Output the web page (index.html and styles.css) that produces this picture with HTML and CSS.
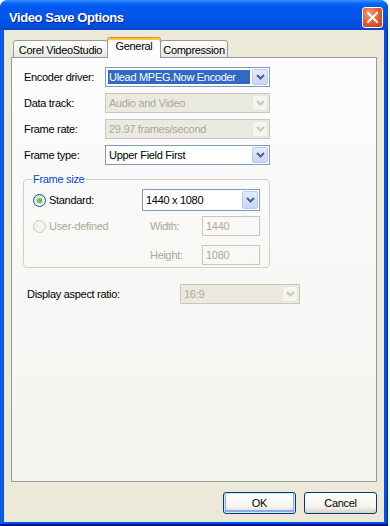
FILE: index.html
```html
<!DOCTYPE html>
<html>
  <head>
    <title>Video Save Options</title>
    <link rel="stylesheet" href="styles.css">
  </head>
  <body>
    <div class="window">
      <div class="titlebar">
        <span class="title">Video Save Options</span>
        <span class="close">
          <svg width="13" height="13" viewBox="0 0 13 13">
            <path d="M2 2L11 11M11 2L2 11" stroke="#fff" stroke-width="2" stroke-linecap="square"/>
          </svg>
        </span>
      </div>

      <div class="client">
        <div class="tabs">
          <span class="tab tab-corel">Corel VideoStudio</span>
          <span class="tab tab-general active">General</span>
          <span class="tab tab-compression">Compression</span>
        </div>

        <div class="panel">
          <div class="row">
            <label>Encoder driver:</label>
            <div class="combo focus">
              <span class="combo-text">Ulead MPEG.Now Encoder</span>
              <span class="combo-btn">
                <svg width="9" height="6" viewBox="0 0 9 6"><path d="M1 1l3.5 3.5L8 1" fill="none" stroke="#4D6185" stroke-width="2"/></svg>
              </span>
            </div>
          </div>
          <div class="row">
            <label>Data track:</label>
            <div class="combo disabled">
              <span class="combo-text">Audio and Video</span>
              <span class="combo-btn">
                <svg width="9" height="6" viewBox="0 0 9 6"><path d="M1 1l3.5 3.5L8 1" fill="none" stroke="#C9C7BA" stroke-width="2"/></svg>
              </span>
            </div>
          </div>
          <div class="row">
            <label>Frame rate:</label>
            <div class="combo disabled">
              <span class="combo-text">29.97 frames/second</span>
              <span class="combo-btn">
                <svg width="9" height="6" viewBox="0 0 9 6"><path d="M1 1l3.5 3.5L8 1" fill="none" stroke="#C9C7BA" stroke-width="2"/></svg>
              </span>
            </div>
          </div>
          <div class="row">
            <label>Frame type:</label>
            <div class="combo">
              <span class="combo-text">Upper Field First</span>
              <span class="combo-btn">
                <svg width="9" height="6" viewBox="0 0 9 6"><path d="M1 1l3.5 3.5L8 1" fill="none" stroke="#4D6185" stroke-width="2"/></svg>
              </span>
            </div>
          </div>

          <fieldset class="group">
            <legend>Frame size</legend>
            <div class="group-grid">
              <div class="option">
                <span class="radio checked"></span>
                <span>Standard:</span>
              </div>
              <div class="combo combo-size">
                <span class="combo-text">1440 x 1080</span>
                <span class="combo-btn">
                  <svg width="9" height="6" viewBox="0 0 9 6"><path d="M1 1l3.5 3.5L8 1" fill="none" stroke="#4D6185" stroke-width="2"/></svg>
                </span>
              </div>

              <div class="option muted">
                <span class="radio disabled"></span>
                <span>User-defined</span>
              </div>
              <span class="dim-label muted">Width:</span>
              <span class="field">1440</span>

              <span class="spacer"></span>
              <span class="dim-label muted last">Height:</span>
              <span class="field last">1080</span>
            </div>
          </fieldset>

          <div class="row aspect">
            <label>Display aspect ratio:</label>
            <div class="combo disabled combo-aspect">
              <span class="combo-text">16:9</span>
              <span class="combo-btn">
                <svg width="9" height="6" viewBox="0 0 9 6"><path d="M1 1l3.5 3.5L8 1" fill="none" stroke="#C9C7BA" stroke-width="2"/></svg>
              </span>
            </div>
          </div>
        </div>

        <div class="buttons">
          <button class="btn default">OK</button>
          <button class="btn">Cancel</button>
        </div>
      </div>
    </div>
  </body>
</html>
```

FILE: styles.css
```css
* {
  box-sizing: border-box;
}

body {
  margin: 0;
  background-color: #fff;
  font-family: "Liberation Sans", Arial, sans-serif;
  font-size: 11px;
  letter-spacing: -0.3px;
  color: #000;
}

.window {
  width: 388px;
  height: 526px;
  display: flex;
  flex-direction: column;
  background: linear-gradient(to right, #0831D9 0, #166AEE 1px, #0055E5 3px, #0055E5 385px, #0441C5 387px, #001EA0 388px);
  border-radius: 8px 8px 0 0;
  box-shadow: inset 0 -2px #00138C;
}

.titlebar {
  height: 30px;
  display: flex;
  align-items: center;
  justify-content: space-between;
  padding: 4px 5px 0 9px;
  border-radius: 8px 8px 0 0;
  background: linear-gradient(#3D95FF 0, #0A6AF8 3px, #0058EE 7px, #0055EA 18px, #0050E0 25px, #0046CF 30px);
}

.title {
  color: #fff;
  font-weight: bold;
  font-size: 13px;
  letter-spacing: -0.4px;
  text-shadow: 1px 1px #0A1E8C;
}

.close {
  width: 21px;
  height: 21px;
  border: 1px solid #fff;
  border-radius: 3px;
  background: radial-gradient(circle at 35% 30%, #F39C7C, #E0572C 55%, #C4401A);
  display: flex;
  align-items: center;
  justify-content: center;
}

.client {
  flex: 1;
  margin: 0 4px 4px;
  padding: 7px 7px 8px;
  background-color: #ECE9D8;
  display: flex;
  flex-direction: column;
}

/* tabs */
.tabs {
  display: flex;
  align-items: flex-end;
  height: 21px;
  padding-left: 2px;
  margin-bottom: -1px;
  position: relative;
  z-index: 1;
}

.tab {
  height: 18px;
  border: 1px solid #919B9C;
  border-radius: 3px 3px 0 0;
  background: linear-gradient(#FFFFFF, #F3F2EC 60%, #E8E7DF);
  display: flex;
  align-items: center;
  justify-content: center;
  padding-top: 1px;
}

.tab-corel {
  width: 95px;
}

.tab-general {
  width: 54px;
  margin-left: -1px;
}

.tab-compression {
  width: 68px;
  margin-left: -1px;
}

.tab.active {
  height: 21px;
  border-bottom: none;
  border-top-color: #E68B2C;
  box-shadow: inset 0 2px #FFC73C;
  background: #FCFCFE;
  padding-top: 0;
  padding-bottom: 5px;
  position: relative;
  z-index: 2;
}

.panel {
  flex: 1;
  border: 1px solid #919B9C;
  background: linear-gradient(#FCFCFE, #F4F3EE);
  padding: 9px 12px 0;
}

/* form rows */
.row {
  display: flex;
  align-items: center;
  height: 20px;
  margin-bottom: 6px;
}

.row label {
  width: 81px;
}

.combo {
  width: 165px;
  height: 20px;
  display: flex;
  border: 1px solid #7F9DB9;
  background-color: #fff;
  padding: 1px;
}

.combo-text {
  flex: 1;
  display: flex;
  align-items: center;
  padding-left: 2px;
  white-space: nowrap;
}

.combo-btn {
  width: 16px;
  border: 1px solid #B9CBF3;
  border-radius: 2px;
  background: linear-gradient(#E3EBFD, #C6D6FB);
  display: flex;
  align-items: center;
  justify-content: center;
}

.combo.focus .combo-text {
  background-color: #316AC5;
  color: #fff;
  margin: 1px 2px 1px 1px;
  padding-left: 1px;
}

.combo.disabled {
  border-color: #C9C7BA;
  background-color: #EBEAE1;
  color: #ACA899;
}

.combo.disabled .combo-btn {
  border-color: #E6E5DC;
  background: #F5F4EF;
}

/* frame size group */
.group {
  width: 247px;
  margin: 8px 0 0 -1px;
  padding: 0 8px 2px;
  border: 1px solid #D0D0BF;
  border-radius: 4px;
}

.group legend {
  padding: 0 1px;
  line-height: 13px;
  color: #0046D5;
}

.group-grid {
  display: grid;
  grid-template-columns: 110px 60px 58px;
  grid-template-rows: 22px 20px 24px;
  row-gap: 5px;
  margin-top: 3px;
}

.option {
  display: flex;
  align-items: center;
  gap: 3px;
  padding-left: 1px;
}

.combo-size {
  grid-column: 2 / 4;
  width: 118px;
  height: 22px;
}

.radio {
  width: 13px;
  height: 13px;
  border-radius: 50%;
  border: 1px solid #1C5180;
  background: linear-gradient(135deg, #DCD9D0, #fff);
  display: flex;
  align-items: center;
  justify-content: center;
}

.radio.checked::after {
  content: "";
  width: 5px;
  height: 5px;
  border-radius: 50%;
  background: radial-gradient(circle at 40% 40%, #6BE067, #21A121);
}

.radio.disabled {
  border-color: #CAC8BB;
  background: #F5F4EA;
}

.muted {
  color: #ACA899;
}

.dim-label {
  padding-left: 8px;
  display: flex;
  align-items: center;
}

.field {
  border: 1px solid #C9C7BA;
  color: #ACA899;
  padding-left: 3px;
  display: flex;
  align-items: center;
}

.last {
  margin-top: 4px;
}

.aspect {
  margin-top: 16px;
}

.aspect label {
  width: 156px;
  padding-left: 3px;
}

.combo-aspect {
  width: 120px;
}

/* buttons */
.buttons {
  display: flex;
  justify-content: flex-end;
  gap: 8px;
  margin-top: 10px;
}

.btn {
  width: 73px;
  height: 22px;
  border: 1px solid #003C74;
  border-radius: 3px;
  background: linear-gradient(#FFFFFF, #F4F3EE 70%, #D6D0C5);
  font-family: "Liberation Sans", Arial, sans-serif;
  font-size: 11px;
  letter-spacing: -0.3px;
  color: #000;
  padding: 0;
}

.btn.default {
  box-shadow: inset 0 0 0 1px #CEE7FF, inset 0 -1px 0 2px #89ADE4;
}
```
